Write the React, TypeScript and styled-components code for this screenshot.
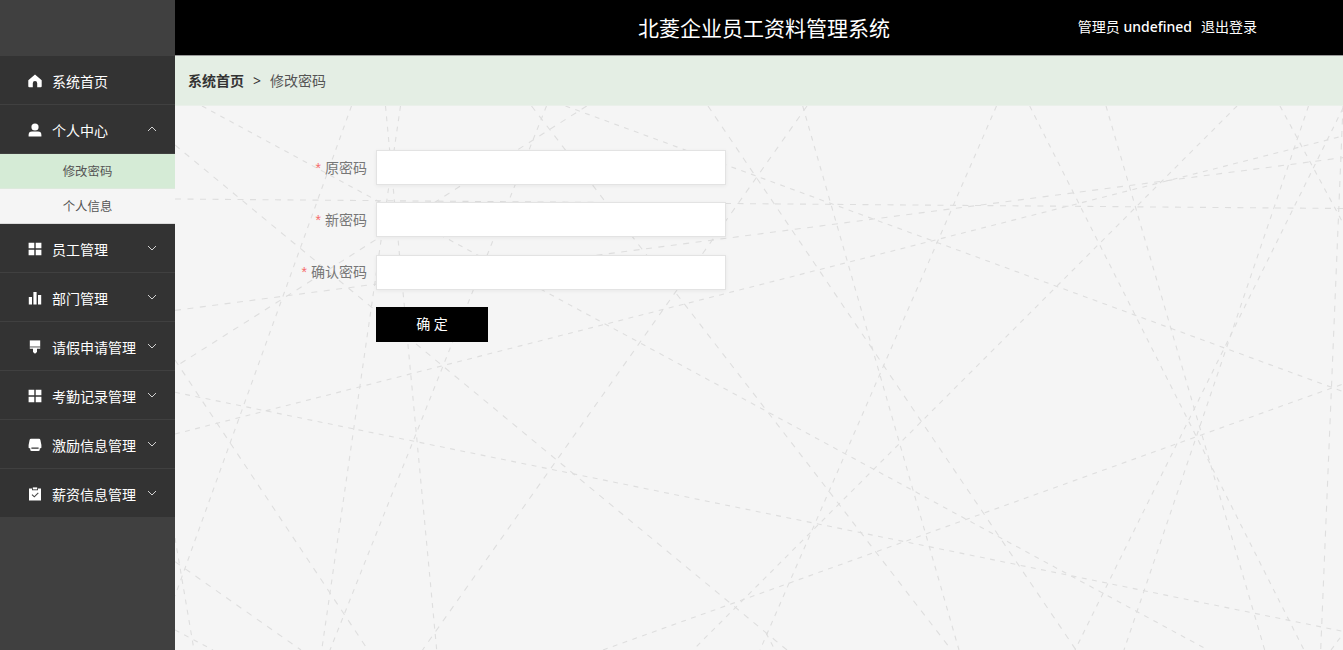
import React from "react";
import styled, { createGlobalStyle } from "styled-components";

const GlobalStyle = createGlobalStyle`
  * { box-sizing: border-box; }
  body {
    margin: 0;
    font-family: "Noto Sans", "Noto Sans CJK SC", sans-serif;
    font-size: 14px;
    background: #f5f5f5;
  }
`;

const Page = styled.div`
  display: flex;
  height: 650px;
  overflow: hidden;
`;

const Sidebar = styled.nav`
  width: 175px;
  flex: none;
  background: #404040;
  padding-top: 56px;
`;

const MenuItem = styled.div`
  display: flex;
  align-items: center;
  height: 49px;
  padding: 0 17px 0 28px;
  background: #333;
  border-bottom: 1px solid #404040;
  color: #fff;
  line-height: 20px;
`;

const MenuIcon = styled.svg`
  width: 14px;
  height: 14px;
  flex: none;
  margin: 2px 10px 0 0;
  fill: #fff;
`;

const MenuLabel = styled.span`
  flex: 1;
  white-space: nowrap;
  padding-top: 4px;
`;

const Chevron = styled.svg<{ $open?: boolean }>`
  width: 12px;
  height: 12px;
  flex: none;
  margin-top: -1px;
  fill: none;
  stroke: #d2d2d2;
  transform: ${(p) => (p.$open ? "rotate(180deg)" : "none")};
`;

const SubItem = styled.div<{ $active?: boolean }>`
  height: 35px;
  line-height: 36px;
  text-align: center;
  font-size: 12.4px;
  color: #555;
  background: ${(p) => (p.$active ? "#d5ebd6" : "#f5f5f5")};
  border-bottom: 1px solid ${(p) => (p.$active ? "#dde9dd" : "#dcdcdc")};
`;

const Main = styled.div`
  flex: 1;
  display: flex;
  flex-direction: column;
  min-width: 0;
`;

const Header = styled.header`
  display: grid;
  grid-template-columns: 1fr auto 1fr;
  align-items: center;
  height: 56px;
  padding: 0 86px 1px 90px;
  background: #000;
  border-bottom: 1px solid #999;
  color: #fff;
`;

const Title = styled.h1`
  grid-column: 2;
  margin: 0;
  padding: 1px 0 0 6px;
  font-size: 21px;
  font-weight: 400;
  line-height: 32px;
`;

const Account = styled.div`
  display: flex;
  justify-content: flex-end;
  gap: 9px;
  line-height: 20px;
  white-space: nowrap;
`;

const UserName = styled.span`
  font-weight: 500;
`;

const Breadcrumb = styled.div`
  display: flex;
  align-items: center;
  height: 50px;
  flex: none;
  padding: 1px 13px 0;
  background: #e4eee4;
  border-bottom: 1px solid #eaf0ea;
  color: #555;
  line-height: 20px;
`;

const Crumb = styled.span<{ $home?: boolean }>`
  font-weight: ${(p) => (p.$home ? 700 : 400)};
  color: ${(p) => (p.$home ? "#333" : "#555")};
`;

const Separator = styled.span`
  margin: 0 9px;
  font-size: 14px;
  color: #333;
`;

const Content = styled.main`
  position: relative;
  flex: 1;
  padding: 44px 0 0 96px;
`;

const Backdrop = styled.svg`
  position: absolute;
  inset: 0;
  width: 100%;
  height: 100%;
  stroke: #dedede;
  stroke-width: 1.1;
`;

const Strand = styled.line<{ $wide: boolean }>`
  stroke-dasharray: ${(p) => (p.$wide ? "6 6.5" : "4.9 5.5")};
`;

const Form = styled.form`
  position: relative;
  display: flex;
  flex-direction: column;
  gap: 17.4px;
`;

const Field = styled.label`
  display: flex;
  align-items: center;
  height: 35px;
`;

const FieldLabel = styled.span`
  display: flex;
  justify-content: flex-end;
  width: 105px;
  padding-right: 9px;
  color: #777;
  line-height: 20px;

  &::before {
    content: "*";
    margin-right: 4px;
    font-family: "Liberation Sans", sans-serif;
    color: #f56c6c;
  }
`;

const Input = styled.input`
  width: 350px;
  height: 35px;
  padding: 0 12px;
  border: 1px solid #e3e3e3;
  background: #fff;
  box-shadow: 0 1px 4px rgba(0, 0, 0, 0.06);
  outline: none;
`;

const Submit = styled.button`
  width: 112px;
  height: 35px;
  margin-left: 105px;
  padding: 0 0 1px;
  border: 0;
  background: #000;
  color: #fff;
  font: inherit;
  line-height: 34px;
`;

const icons: Record<string, React.ReactNode> = {
  home: <path d="M7 .4.3 6.300v5.900Q.3 13.200 1.300 13.200h3.500V9.300a2.200 2.200 0 0 1 4.400 0v3.900h3.500q1 0 1-1V6.300z" />,
  user: (
    <>
      <circle cx="7" cy="4" r="3.6" />
      <path d="M.6 13.400V12q0-3.400 3.400-3.400h6q3.400 0 3.400 3.400v1.400z" />
    </>
  ),
  grid: <path d="M.6.8h5.700v5.500H.6zM7.700.8h5.700v5.500H7.700zM.6 7.700h5.700v5.500H.6zM7.700 7.700h5.700v5.500H7.700z" />,
  bars: <path d="M.8 6h3.200v7.400H.8zM5.400 1h3.200v12.400H5.400zM10 4h3.200v9.400H10z" />,
  brush: (
    <>
      <path d="M1.800.4h10.400v6H1.800z" />
      <path fill="#bbb" d="M1.800 6.400h10.400v1H1.800z" />
      <path d="M1.800 7.400h10.400v1.400H9v3.200l-2 1.800-2-1.800V8.800H1.800z" />
    </>
  ),
  printer: (
    <path
      fillRule="evenodd"
      d="M3 .8h8q1.200 0 1.400 1.200l1 5v2.400q0 .8-.8.8h-.8v1.200q0 1.600-1.600 1.600H3.800q-1.600 0-1.600-1.600v-1.200h-.8q-.8 0-.8-.8V7l1-5Q1.800.8 3 .8zM3.400 9.600h7.200v1.100H3.400z"
    />
  ),
  claim: (
    <>
      <path fillRule="evenodd" d="M1 1.600h3v1.600h6V1.600h3v11.800H1z" />
      <path d="M4.800.4h4.400v2H4.800z" />
      <path d="m4 7.600 2.300 2.200 4-4" fill="none" stroke="#444" strokeWidth="1.100" />
    </>
  ),
};

const groups = [
  { icon: "grid", label: "员工管理" },
  { icon: "bars", label: "部门管理" },
  { icon: "brush", label: "请假申请管理" },
  { icon: "grid", label: "考勤记录管理" },
  { icon: "printer", label: "激励信息管理" },
  { icon: "claim", label: "薪资信息管理" },
];

type Segment = [number, number, number, number];

const strands: Segment[] = [
  [202, 106, 1208, 650],
  [351.5, 106, 175, 596],
  [385.5, 106, 436.7, 650],
  [400.5, 106, 321.7, 650],
  [546.5, 106, 330, 650],
  [565.5, 106, 1343, 391.5],
  [175, 434, 1343, 136],
  [175, 392.3, 1343, 631.4],
  [175, 538, 194, 650],
  [175, 630, 213, 650],
  [802.7, 106, 959, 650],
  [996.5, 106, 760, 650],
  [1237, 106, 693, 650],
  [603, 650, 1343, 384],
  [1029.7, 106, 1304, 650],
  [1106, 106, 1264.7, 650],
  [1308.5, 106, 1124, 650],
  [1343, 108, 1075, 650],
  [1280, 106, 1343, 223],
  [1331, 650, 1343, 634],
  [766, 633, 775, 650],
];

const wideStrands: Segment[] = [
  [175, 145, 787, 650],
  [175, 199, 1343, 208.5],
  [531.5, 106, 951.5, 650],
  [586.7, 106, 175, 367],
  [175, 310.4, 1343, 157.6],
  [175, 360, 368, 650],
  [175, 561.7, 301, 650],
  [807, 106, 422.5, 650],
  [708, 106, 1076, 650],
  [1343, 106, 1320.7, 650],
];

function Strands({ items, wide = false }: { items: Segment[]; wide?: boolean }) {
  return (
    <>
      {items.map(([x1, y1, x2, y2], i) => (
        <Strand key={i} $wide={wide} x1={x1} y1={y1} x2={x2} y2={y2} />
      ))}
    </>
  );
}

function Glyph({ name }: { name: string }) {
  return <MenuIcon viewBox="0 0 14 14">{icons[name]}</MenuIcon>;
}

function Arrow({ open }: { open?: boolean }) {
  return (
    <Chevron $open={open} viewBox="0 0 12 12">
      <path d="M2 4l4 4 4-4" />
    </Chevron>
  );
}

export default function App() {
  return (
    <>
      <GlobalStyle />
      <Page>
        <Sidebar>
          <MenuItem>
            <Glyph name="home" />
            <MenuLabel>系统首页</MenuLabel>
          </MenuItem>
          <MenuItem>
            <Glyph name="user" />
            <MenuLabel>个人中心</MenuLabel>
            <Arrow open />
          </MenuItem>
          <SubItem $active>修改密码</SubItem>
          <SubItem>个人信息</SubItem>
          {groups.map((g) => (
            <MenuItem key={g.label}>
              <Glyph name={g.icon} />
              <MenuLabel>{g.label}</MenuLabel>
              <Arrow />
            </MenuItem>
          ))}
        </Sidebar>
        <Main>
          <Header>
            <Title>北菱企业员工资料管理系统</Title>
            <Account>
              <span>
                管理员 <UserName>undefined</UserName>
              </span>
              <span>退出登录</span>
            </Account>
          </Header>
          <Breadcrumb>
            <Crumb $home>系统首页</Crumb>
            <Separator>&gt;</Separator>
            <Crumb>修改密码</Crumb>
          </Breadcrumb>
          <Content>
            <Backdrop viewBox="175 106 1168 544">
              <Strands items={strands} />
              <Strands items={wideStrands} wide />
            </Backdrop>
            <Form>
              {["原密码", "新密码", "确认密码"].map((label) => (
                <Field key={label}>
                  <FieldLabel>{label}</FieldLabel>
                  <Input type="password" />
                </Field>
              ))}
              <Submit type="button">确 定</Submit>
            </Form>
          </Content>
        </Main>
      </Page>
    </>
  );
}
